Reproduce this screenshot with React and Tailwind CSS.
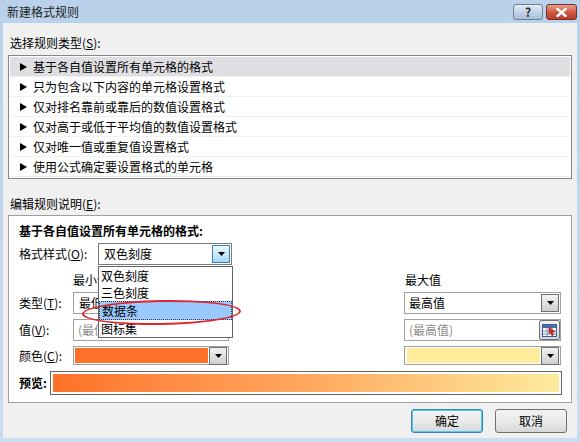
import React from 'react';

const FONT = { fontFamily: '"Noto Sans CJK SC", "Microsoft YaHei", sans-serif' };

const rules = [
  '基于各自值设置所有单元格的格式',
  '只为包含以下内容的单元格设置格式',
  '仅对排名靠前或靠后的数值设置格式',
  '仅对高于或低于平均值的数值设置格式',
  '仅对唯一值或重复值设置格式',
  '使用公式确定要设置格式的单元格',
];

const Arrow = () => (
  <svg width="7" height="4" viewBox="0 0 7 4">
    <polygon points="0,0 7,0 3.5,4" fill="#000" />
  </svg>
);

const DropButton = ({ active }) => (
  <div
    className={`w-[18px] h-[18px] flex items-center justify-center border ${
      active
        ? 'border-[#3c7fb1] bg-gradient-to-b from-[#eaf6fd] to-[#a7d9f5]'
        : 'border-[#707070] bg-gradient-to-b from-[#f2f2f2] to-[#cfcfcf]'
    }`}
  >
    <Arrow />
  </div>
);

const RefIcon = () => (
  <div className="w-[21px] h-[20px] border border-[#707070] rounded-[2px] bg-gradient-to-b from-[#f4f4f4] to-[#d6d6d6] flex items-center justify-center">
    <svg width="15" height="13" viewBox="0 0 15 13">
      <rect x="0.5" y="0.5" width="14" height="12" fill="#fff" stroke="#3a5c9a" />
      <rect x="1" y="1" width="13" height="3" fill="#4a6fb0" />
      <line x1="1" y1="7" x2="14" y2="7" stroke="#6f8fc8" />
      <line x1="1" y1="10" x2="14" y2="10" stroke="#6f8fc8" />
      <line x1="5" y1="4" x2="5" y2="12" stroke="#6f8fc8" />
      <line x1="10" y1="4" x2="10" y2="12" stroke="#6f8fc8" />
      <polygon points="7,3 13,8 10,8 11.5,11 10,11.5 8.7,8.6 7,10" fill="#e02a1e" stroke="#8a1010" strokeWidth="0.6" />
    </svg>
  </div>
);

export default function App() {
  return (
    <div
      className="w-[580px] h-[442px] bg-gradient-to-b from-[#b9d1ea] to-[#c9dcf0] relative overflow-hidden text-[12px] text-black"
      style={FONT}
    >
      {/* title bar */}
      <div className="h-[23px] flex items-center justify-between pl-[7px] pr-[3px]">
        <span className="text-[12px] leading-none text-[#1e1e1e]">新建格式规则</span>
        <div className="flex gap-[3px] items-center self-start mt-[4px]">
          <div className="w-[30px] h-[16px] rounded-[3px] border border-[#6d7f96] bg-gradient-to-b from-[#e4edf7] via-[#c2d3e7] to-[#a9bfdb] flex items-center justify-center text-[#2a2a2a] text-[12px] font-bold leading-none">
            ?
          </div>
          <div className="w-[31px] h-[16px] rounded-[3px] border border-[#7a2b24] bg-gradient-to-b from-[#e7a193] via-[#cf5a43] to-[#b73d2b] flex items-center justify-center">
            <svg width="11" height="9" viewBox="0 0 11 9">
              <path d="M1.5 1 L9.5 8 M9.5 1 L1.5 8" stroke="#fff" strokeWidth="2.4" strokeLinecap="square" />
            </svg>
          </div>
        </div>
      </div>

      {/* body */}
      <div className="absolute left-[3px] right-[3px] top-[23px] bottom-[4px] bg-[#f0f0f0] px-[5px] flex flex-col">
        <div className="mt-[12px] h-[16px] leading-[16px] pl-[2px]">
          选择规则类型(<u>S</u>):
        </div>

        <div className="mt-[4px] w-[564px] border border-[#828790] bg-white p-[1px]">
          {rules.map((r, i) => (
            <div
              key={r}
              className={`h-[20px] flex items-center pl-[10px] border-b border-[#f0f0f0] ${
                i === 0 ? 'bg-[#dfdfe3]' : ''
              }`}
            >
              <svg width="7" height="8" viewBox="0 0 7 8" className="mr-[6px]">
                <polygon points="0,0 7,4 0,8" fill="#000" />
              </svg>
              <span className="leading-none">{r}</span>
            </div>
          ))}
        </div>

        <div className="mt-[17px] h-[16px] leading-[16px] pl-[2px]">
          编辑规则说明(<u>E</u>):
        </div>

        <div className="mt-[3px] w-[564px] h-[188px] border border-[#a0a0a0] bg-white relative pl-[10px] pr-[9px]">
          <div className="mt-[8px] h-[14px] leading-[14px] font-bold">基于各自值设置所有单元格的格式:</div>

          {/* style row */}
          <div className="mt-[5px] flex items-center h-[22px]">
            <span className="w-[79px]">格式样式(<u>O</u>):</span>
            <div className="w-[134px] h-[22px] border border-[#7a7a7a] bg-white flex items-center justify-between pl-[5px] pr-[1px]">
              <span className="leading-none">双色刻度</span>
              <DropButton active />
            </div>
          </div>

          {/* headers */}
          <div className="mt-[7px] h-[16px] flex items-center leading-none">
            <span className="ml-[54px]">最小值</span>
            <span className="ml-[296px]">最大值</span>
          </div>

          {/* type */}
          <div className="mt-[4px] flex items-center h-[22px]">
            <span className="w-[54px]">类型(<u>T</u>):</span>
            <div className="w-[156px] h-[22px] border border-[#a0a0a0] flex items-center justify-between pl-[5px] pr-[1px]">
              <span>最低值</span>
              <DropButton />
            </div>
            <div className="ml-[175px] w-[157px] h-[22px] border border-[#a0a0a0] flex items-center justify-between pl-[4px] pr-[1px]">
              <span className="leading-none">最高值</span>
              <DropButton />
            </div>
          </div>

          {/* value */}
          <div className="mt-[5px] flex items-center h-[22px]">
            <span className="w-[54px]">值(<u>V</u>):</span>
            <div className="w-[156px] h-[22px] border border-[#a0a0a0] flex items-center pl-[4px] text-[#8a8a8a]">
              (最低值)
            </div>
            <div className="ml-[175px] w-[157px] h-[22px] border border-[#a0a0a0] flex items-center justify-between pl-[4px] pr-0 text-[#8a8a8a]">
              <span className="leading-none">(最高值)</span>
              <RefIcon />
            </div>
          </div>

          {/* colour */}
          <div className="mt-[5px] flex items-center h-[19px]">
            <span className="w-[54px]">颜色(<u>C</u>):</span>
            <div className="w-[156px] h-[19px] border border-[#a0a0a0] flex items-center p-[1px] gap-[1px]">
              <div className="flex-1 h-full bg-[#ff7128]" />
              <DropButton />
            </div>
            <div className="ml-[175px] w-[157px] h-[19px] border border-[#a0a0a0] flex items-center p-[1px] gap-[1px]">
              <div className="flex-1 h-full bg-[#ffeb9c] ml-[1px]" />
              <DropButton />
            </div>
          </div>

          {/* preview */}
          <div className="mt-[6px] flex items-center h-[24px]">
            <span className="w-[31px] font-bold">预览:</span>
            <div className="w-[512px] h-[24px] border border-[#646464] p-[2px] bg-white">
              <div className="w-full h-full bg-gradient-to-r from-[#ff7128] via-[#ffa75e] to-[#ffeb9c]" />
            </div>
          </div>

          {/* open dropdown list */}
          <div className="absolute left-[89px] top-[50px] w-[135px] border border-[#646464] bg-white flex flex-col leading-none">
            <div className="h-[17px] flex items-center pl-[2px]">双色刻度</div>
            <div className="h-[17px] flex items-center pl-[2px]">三色刻度</div>
            <div className="h-[19px] flex items-center pl-[2px] bg-[#99c9ff] border border-dotted border-[#333]">数据条</div>
            <div className="h-[17px] flex items-center pl-[2px]">图标集</div>
          </div>

          {/* red annotation ellipse */}
          <div className="absolute left-[73px] top-[84px] w-[159px] h-[25px] rounded-[50%] border-2 border-[#e0262c] rotate-[-1deg]" />
        </div>

        {/* buttons */}
        <div className="mt-[6px] flex justify-end gap-[12px] pr-[5px]">
          <button className="w-[72px] h-[24px] rounded-[3px] border border-[#3c7fb1] bg-gradient-to-b from-[#f2f2f2] via-[#ebebeb] to-[#d6d6d6] shadow-[inset_0_0_0_1px_#48d0f4] text-[12px]">
            确定
          </button>
          <button className="w-[72px] h-[24px] rounded-[3px] border border-[#707070] bg-gradient-to-b from-[#f2f2f2] via-[#ebebeb] to-[#d6d6d6] text-[12px]">
            取消
          </button>
        </div>
      </div>
    </div>
  );
}
